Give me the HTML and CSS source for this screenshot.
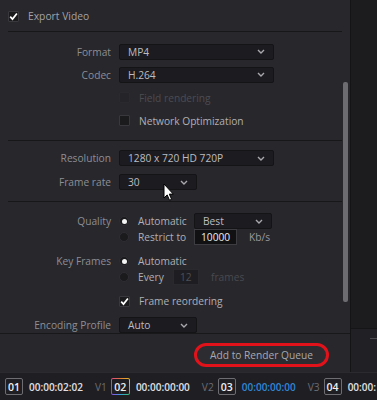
FILE: index.html
```html
<!DOCTYPE html>
<html lang="en">
<head>
    <meta charset="UTF-8">
    <meta name="viewport" content="width=device-width, initial-scale=1.0">
    <title>Render Settings</title>
    <link rel="stylesheet" href="styles.css">
</head>
<body>
    <div class="window">
        <div class="upper">
            <div class="panel">
                <div class="scroller">
                    <div class="content">
                        <!-- Export toggle -->
                        <div class="export-row">
                            <span class="check on"><svg width="11" height="11" viewBox="0 0 11 11"><path d="M2.2 5.6l2.3 2.5 4.4-5.6" fill="none" stroke="#fff" stroke-width="1.7"/></svg></span>
                            <span class="export-label">Export Video</span>
                        </div>

                        <!-- Format / codec -->
                        <div class="section s1">
                            <div class="row">
                                <span class="label">Format</span>
                                <div class="select wide"><span>MP4</span><svg class="chev" width="8" height="5" viewBox="0 0 8 5"><path d="M1 1l3 3 3-3" fill="none" stroke="#a8a8ad" stroke-width="1.4"/></svg></div>
                            </div>
                            <div class="row">
                                <span class="label">Codec</span>
                                <div class="select wide"><span>H.264</span><svg class="chev" width="8" height="5" viewBox="0 0 8 5"><path d="M1 1l3 3 3-3" fill="none" stroke="#a8a8ad" stroke-width="1.4"/></svg></div>
                            </div>
                            <div class="row">
                                <span class="label"></span>
                                <div class="opt disabled"><span class="check"></span><span>Field rendering</span></div>
                            </div>
                            <div class="row">
                                <span class="label"></span>
                                <div class="opt"><span class="check"></span><span>Network Optimization</span></div>
                            </div>
                        </div>

                        <!-- Resolution -->
                        <div class="section s2">
                            <div class="row">
                                <span class="label">Resolution</span>
                                <div class="select wide"><span>1280 x 720 HD 720P</span><svg class="chev" width="8" height="5" viewBox="0 0 8 5"><path d="M1 1l3 3 3-3" fill="none" stroke="#a8a8ad" stroke-width="1.4"/></svg></div>
                            </div>
                            <div class="row">
                                <span class="label">Frame rate</span>
                                <div class="select narrow"><span>30</span><svg class="chev" width="8" height="5" viewBox="0 0 8 5"><path d="M1 1l3 3 3-3" fill="none" stroke="#a8a8ad" stroke-width="1.4"/></svg></div>
                            </div>
                        </div>

                        <!-- Quality / keyframes -->
                        <div class="section s3">
                            <div class="row tight">
                                <span class="label">Quality</span>
                                <div class="opt">
                                    <span class="radio on"></span><span class="opt-text">Automatic</span>
                                    <div class="select narrow"><span>Best</span><svg class="chev" width="8" height="5" viewBox="0 0 8 5"><path d="M1 1l3 3 3-3" fill="none" stroke="#a8a8ad" stroke-width="1.4"/></svg></div>
                                </div>
                            </div>
                            <div class="row tight">
                                <span class="label"></span>
                                <div class="opt">
                                    <span class="radio"></span><span class="opt-text">Restrict to</span>
                                    <span class="field">10000</span><span class="unit">Kb/s</span>
                                </div>
                            </div>
                            <div class="row tight spaced">
                                <span class="label">Key Frames</span>
                                <div class="opt"><span class="radio on"></span><span>Automatic</span></div>
                            </div>
                            <div class="row tight">
                                <span class="label"></span>
                                <div class="opt">
                                    <span class="radio"></span><span class="opt-text short">Every</span>
                                    <span class="field small">12</span><span class="unit dim">frames</span>
                                </div>
                            </div>
                            <div class="row tight spaced">
                                <span class="label"></span>
                                <div class="opt"><span class="check on"><svg width="11" height="11" viewBox="0 0 11 11"><path d="M2.2 5.6l2.3 2.5 4.4-5.6" fill="none" stroke="#fff" stroke-width="1.7"/></svg></span><span>Frame reordering</span></div>
                            </div>
                            <div class="row tight spaced">
                                <span class="label">Encoding Profile</span>
                                <div class="select narrow"><span>Auto</span><svg class="chev" width="8" height="5" viewBox="0 0 8 5"><path d="M1 1l3 3 3-3" fill="none" stroke="#a8a8ad" stroke-width="1.4"/></svg></div>
                            </div>
                        </div>
                    </div>
                    <div class="track"><div class="thumb"></div></div>
                </div>

                <div class="footer">
                    <button class="queue-btn">Add to Render Queue</button>
                </div>
            </div>
            <div class="side">
                <div class="side-top"></div>
                <div class="side-bottom"><div class="side-mark"></div></div>
            </div>
        </div>

        <!-- Timecode strip -->
        <div class="timebar">
            <span class="clip">01</span><span class="tc">00:00:02:02</span><span class="vl">V1</span>
            <span class="clip active">02</span><span class="tc">00:00:00:00</span><span class="vl">V2</span>
            <span class="clip">03</span><span class="tc blue">00:00:00:00</span><span class="vl">V3</span>
            <span class="clip">04</span><span class="tc">00:00:</span>
        </div>
    </div>

    <svg class="cursor" width="11" height="18" viewBox="0 0 11 18"><path d="M1 1v14l3.2-3.1 2.3 5.3 2.1-.9-2.3-5.2H10.3z" fill="#fff" stroke="#000" stroke-width="1"/></svg>
</body>
</html>
```

FILE: styles.css
```css
body {
    margin: 0;
    width: 377px;
    height: 400px;
    overflow: hidden;
    background: #1c1c1f;
    font-family: "Open Sans", "Noto Sans", sans-serif;
    font-size: 10.2px;
    color: #8e8e94;
    position: relative;
}
.window {
    display: flex;
    flex-direction: column;
    height: 400px;
}
.upper {
    display: flex;
    height: 372px;
}
.panel {
    width: 350px;
    display: flex;
    flex-direction: column;
    background: #27272c;
    border-right: 1px solid #141416;
}
.side {
    flex: 1;
    display: flex;
    flex-direction: column;
    background: #1c1c1f;
}
.side-top {
    height: 328px;
}
.side-bottom {
    flex: 1;
    background: #212125;
    border-top: 1px solid #151518;
}
.side-mark {
    margin: 9px 0 0 19px;
    height: 1px;
    background: #4a4a4f;
}
.scroller {
    height: 333px;
    display: flex;
    overflow: hidden;
    border-bottom: 1px solid #18181b;
}
.content {
    flex: 1;
    padding-left: 8px;
}
.track {
    width: 8px;
}
.thumb {
    margin: 82px 0 0 1px;
    width: 5px;
    height: 220px;
    background: #6c6c71;
    border-radius: 2px;
}
.export-row {
    height: 31px;
    padding-top: 1px;
    box-sizing: border-box;
    display: flex;
    align-items: center;
    gap: 9px;
}
.export-label {
    font-size: 10.3px;
    color: #a2a2a8;
}
.section {
    border-top: 1px solid #17171a;
}
.s1 {
    padding: 8px 0;
}
.s1 .row {
    height: 23px;
}
.s2 {
    padding: 5px 0 7px;
}
.s2 .row {
    height: 24px;
}
.s3 {
    padding-top: 11px;
}
.row {
    display: grid;
    grid-template-columns: 103px 1fr;
    column-gap: 8px;
    align-items: center;
}
.row.tight {
    height: 16px;
}
.row.spaced {
    margin-top: 8px;
}
.label {
    text-align: right;
    color: #8e8e94;
}
.select {
    height: 16px;
    box-sizing: border-box;
    display: flex;
    align-items: center;
    justify-content: space-between;
    padding: 0 8px;
    background: #1c1c20;
    border: 1px solid #141417;
    border-radius: 2px;
    color: #bcbcc0;
}
.select.wide {
    width: 155px;
}
.select.narrow {
    width: 78px;
}
.opt {
    display: flex;
    align-items: center;
    color: #b0b0b5;
}
.opt > span:nth-child(2) {
    margin-left: 9px;
}
.opt.disabled {
    color: #4c4c52;
}
.opt.disabled .check {
    background: #252529;
    border-color: #2a2a2e;
}
.opt-text {
    width: 56px;
}
.opt-text.short {
    width: 35px;
}
.check {
    width: 11px;
    height: 11px;
    box-sizing: border-box;
    background: #1b1b1e;
    border: 1px solid #38383d;
    border-radius: 1px;
    display: inline-flex;
}
.check svg {
    margin: -1px;
}
.radio {
    width: 10px;
    height: 10px;
    border-radius: 50%;
    background: #1b1b1e;
    border: 1px solid #2e2e33;
    box-sizing: border-box;
    display: inline-flex;
    align-items: center;
    justify-content: center;
}
.radio.on::after {
    content: "";
    width: 5px;
    height: 5px;
    border-radius: 50%;
    background: #f4f4f4;
}
.field {
    height: 16px;
    width: 43px;
    box-sizing: border-box;
    padding-left: 6px;
    line-height: 14px;
    background: #111114;
    border: 1px solid #3c3c41;
    color: #ececee;
}
.field.small {
    width: 26px;
    background: #1e1e22;
    border-color: #2a2a2e;
    color: #4e4e54;
    padding-left: 6px;
}
.unit {
    margin-left: 12px;
    color: #9a9aa0;
}
.unit.dim {
    color: #4a4a50;
}
.footer {
    flex: 1;
    display: flex;
    justify-content: flex-end;
    align-items: flex-start;
    padding: 9px 21px 0 0;
}
.queue-btn {
    width: 135px;
    height: 24px;
    box-sizing: border-box;
    background: #2c2c31;
    border: 3px solid #e2121b;
    border-radius: 12px;
    color: #a9a9ae;
    font-family: "Open Sans", "Noto Sans", sans-serif;
    font-size: 10.2px;
    padding: 0;
}
.timebar {
    height: 28px;
    display: flex;
    align-items: center;
    padding-left: 5px;
    background: #1f1f23;
    border-top: 1px solid #2b2b2f;
    box-sizing: border-box;
    white-space: nowrap;
    overflow: hidden;
}
.clip {
    width: 18px;
    height: 17px;
    box-sizing: border-box;
    display: inline-flex;
    align-items: center;
    justify-content: center;
    border: 1px solid #6e6e72;
    border-radius: 2px;
    color: #f0f0f0;
    font-weight: 600;
    font-size: 10.5px;
    flex-shrink: 0;
}
.clip.active {
    width: 19px;
    border: 1px solid transparent;
    background: linear-gradient(#1f1f23, #1f1f23) padding-box,
        conic-gradient(#e07a30, #e0c030, #40c060, #30a0e0, #a040e0, #e04090, #e07a30) border-box;
}
.tc {
    margin-left: 6px;
    color: #e0e0e4;
    font-weight: 600;
    font-size: 10px;
}
.tc.blue {
    color: #2f86d6;
}
.vl {
    margin: 0 4px 0 12px;
    color: #6c6c71;
}
.cursor {
    position: absolute;
    left: 163px;
    top: 183px;
}
```
